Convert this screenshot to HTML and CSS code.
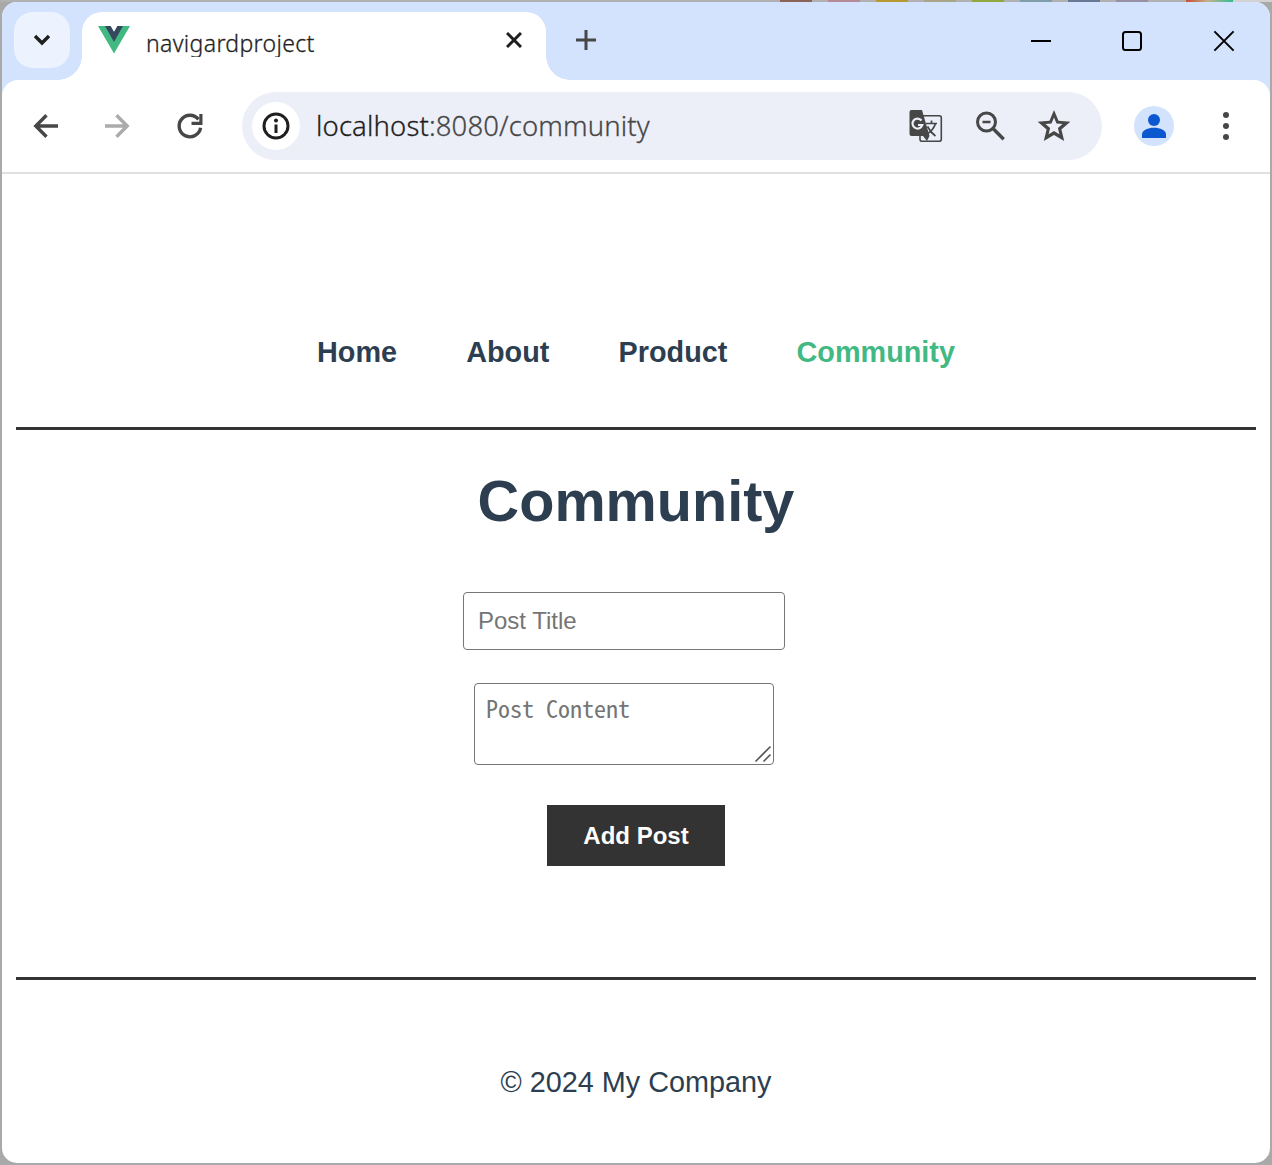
FILE: index.html
```html
<!DOCTYPE html>
<html lang="en">
<head>
<meta charset="utf-8">
<title>navigardproject</title>
<link rel="stylesheet" href="styles.css">
</head>
<body>
<div class="window">
  <div class="tabstrip">
    <div class="tab-search">
      <svg width="18" height="12" viewBox="0 0 18 12"><path d="M2 2l7 7 7-7" fill="none" stroke="#1f1f1f" stroke-width="3.400"/></svg>
    </div>
    <div class="tab-gap"></div>
    <div class="tab">
      <svg class="favicon" width="32" height="28" viewBox="0 0 32 28"><path d="M0 0h12.500L16 6l3.500-6H32L16 27.500z" fill="#42b883"/><path d="M7 0h5.500L16 6l3.500-6H25L16 16z" fill="#35495e"/></svg>
      <span class="tab-title">navigardproject</span>
      <svg class="tab-close" width="16" height="16" viewBox="0 0 16 16"><path d="M1 1l14 14M15 1L1 15" stroke="#1f1f1f" stroke-width="3"/></svg>
    </div>
    <div class="strip-rest">
      <svg width="20" height="20" viewBox="0 0 20 20"><path d="M0 10h20M10 0v20" stroke="#474747" stroke-width="3"/></svg>
      <div class="controls">
        <svg width="20" height="20" viewBox="0 0 20 20"><path d="M1 10h20" stroke="#000" stroke-width="2"/></svg>
        <svg width="20" height="20" viewBox="0 0 20 20"><rect x="1" y="1" width="18" height="18" rx="2.500" fill="none" stroke="#000" stroke-width="2"/></svg>
        <svg width="20" height="20" viewBox="0 0 20 20"><path d="M.4.4l19.200 19.200M19.600.4L.4 19.600" stroke="#000" stroke-width="2"/></svg>
      </div>
    </div>
  </div>
  <div class="toolbar-bg">
    <div class="toolbar">
      <div class="nav-buttons">
        <svg width="24" height="24" viewBox="0 0 24 24"><path d="M24 12H2M12.500 1.200L1.800 12l10.700 10.800" fill="none" stroke="#474747" stroke-width="3.400"/></svg>
        <svg width="24" height="24" viewBox="0 0 24 24"><path d="M0 12h22M11.500 1.200L22.200 12 11.500 22.800" fill="none" stroke="#ababab" stroke-width="3.400"/></svg>
        <svg width="26" height="26" viewBox="0 0 26 26"><path d="M21.500 6.400A10.800 10.800 0 1 0 23.600 14.800" fill="none" stroke="#474747" stroke-width="3.400"/><path d="M22.300 1h3.200v11H14.500V8.800h7.800z" fill="#474747"/></svg>
      </div>
      <div class="omnibox">
        <div class="site-info">
          <svg width="28" height="28" viewBox="0 0 28 28"><circle cx="14" cy="14" r="12" fill="none" stroke="#1f1f1f" stroke-width="3"/><circle cx="14" cy="8.600" r="2" fill="#1f1f1f"/><path d="M14 12.500v8.500" stroke="#1f1f1f" stroke-width="3"/></svg>
        </div>
        <div class="url"><span class="host">localhost</span>:8080/community</div>
        <div class="actions">
          <svg width="34" height="34" viewBox="0 0 34 34"><rect x="11" y="6.800" width="21.300" height="25.400" rx="2" fill="none" stroke="#474747" stroke-width="1.600"/><path d="M2.500 1H13L20.500 27l-2.500 5-4-5H2.500A2 2 0 0 1 .5 25V3a2 2 0 0 1 2-2z" fill="#474747"/><path d="M17 14.500h11M22.500 11.500v3M26.500 14.500q-2 7-9.500 11M18.500 17.500q3 6 8 9.500" fill="none" stroke="#474747" stroke-width="1.700"/><path d="M12.500 11.500A5 5 0 1 0 13.300 16H9" fill="none" stroke="#eceef8" stroke-width="2.200"/></svg>
          <svg width="30" height="30" viewBox="0 0 30 30"><circle cx="11.500" cy="11" r="9" fill="none" stroke="#474747" stroke-width="3"/><path d="M7.500 11h8" stroke="#474747" stroke-width="2.600"/><path d="M18 17.500l10.700 10.700" stroke="#474747" stroke-width="3.400"/></svg>
          <svg width="34" height="32" viewBox="0 0 34 32"><path fill-rule="evenodd" d="M17 0l4.500 10.800L33.300 11.800 24.400 19.500 27.200 31 17 25 6.800 31 9.600 19.500.7 11.800 12.500 10.800zM17 7.500l-2.500 6-6 .5 4.600 4-1.500 6.200 5.400-3.300 5.400 3.300-1.500-6.200 4.600-4-6-.5z" fill="#474747"/></svg>
        </div>
      </div>
      <div class="avatar">
        <svg width="24" height="24" viewBox="0 0 24 24"><circle cx="12" cy="6" r="6" fill="#0b57d0"/><path d="M0 24v-3.500C0 16 6 13.700 12 13.700S24 16 24 20.500V24z" fill="#0b57d0"/></svg>
      </div>
      <svg class="menu" width="6" height="28" viewBox="0 0 6 28"><g fill="#474747"><circle cx="3" cy="3" r="3"/><circle cx="3" cy="14" r="3"/><circle cx="3" cy="25" r="3"/></g></svg>
    </div>
  </div>
  <div class="page">
    <nav class="site-nav"><a>Home</a><a>About</a><a>Product</a><a class="active">Community</a></nav>
    <main class="content">
      <h1>Community</h1>
      <input class="title-input" type="text" placeholder="Post Title">
      <div class="content-field">
        <textarea class="content-input" placeholder="Post Content"></textarea>
        <svg class="grip" width="18" height="18" viewBox="0 0 18 18"><path d="M1.500 16.500l15-15M9.500 16.500l7-7" stroke="#555" stroke-width="1.600"/></svg>
      </div>
      <button class="add-button">Add Post</button>
    </main>
    <footer class="site-footer">© 2024 My Company</footer>
  </div>
</div>
</body>
</html>
```
FILE: styles.css
```css
* { box-sizing: border-box; }
svg { display: block; flex: none; }
body {
  margin: 0;
  height: 1165px;
  padding: 2px;
  overflow: hidden;
  background:
    linear-gradient(90deg, #b1b1b1 0 780px, #8c6254 780px 812px, #b1b1b1 812px 828px, #b58a96 828px 860px, #b1b1b1 860px 876px, #b79a31 876px 908px, #b1b1b1 908px 924px, #aba588 924px 956px, #b1b1b1 956px 972px, #91a83e 972px 1004px, #b1b1b1 1004px 1020px, #7e9faa 1020px 1052px, #b1b1b1 1052px 1068px, #687996 1068px 1100px, #b1b1b1 1100px 1116px, #9990a6 1116px 1148px, #b1b1b1 1148px 1186px, #c84d35 1186px, #c4b28a 1208px, #30bd95 1233px, #d2d2d2 1233px) 0 0 / 100% 2px no-repeat,
    #a9a9a9;
  font-family: "Liberation Sans", Arial, sans-serif;
}
.window {
  height: 1161px;
  display: flex;
  flex-direction: column;
  border-radius: 15px;
  overflow: hidden;
  background: #fff;
}
.tabstrip { display: flex; height: 78px; background: #d3e3fd; }
.tab-search {
  display: flex;
  align-items: center;
  justify-content: center;
  width: 56px;
  height: 56px;
  margin: 10px 0 0 12px;
  border-radius: 19px;
  background: #ecf3fe;
}
.tab-gap {
  width: 24px;
  margin-left: -12px;
  background: radial-gradient(circle at 0 0, transparent 23.500px, #fff 24px) 0 54px / 24px 24px no-repeat;
}
.tab {
  display: flex;
  width: 464px;
  height: 68px;
  margin-top: 10px;
  padding: 0 24px 0 16px;
  border-radius: 20px 20px 0 0;
  background: #fff;
}
.favicon { margin-top: 14px; }
.tab-title {
  flex: 1;
  height: 30px;
  margin: 15px 0 0 16px;
  overflow: hidden;
  line-height: 32px;
  font-family: "Noto Sans", sans-serif;
  font-size: 23px;
  font-weight: 300;
  letter-spacing: .35px;
  -webkit-text-stroke: .3px #1f1f1f;
  color: #1f1f1f;
}
.tab-close { margin-top: 20px; }
.strip-rest {
  flex: 1;
  display: flex;
  justify-content: space-between;
  padding: 28px 36px 0 30px;
  background: radial-gradient(circle at 24px 0, transparent 23.500px, #fff 24px) 0 54px / 24px 24px no-repeat;
}
.controls { display: flex; gap: 72px; padding-top: 1px; }
.controls svg { overflow: visible; }
.toolbar-bg { background: linear-gradient(#d3e3fd 20px, #fff 20px); }
.toolbar {
  display: flex;
  align-items: center;
  height: 94px;
  padding: 0 41px 0 32px;
  border-bottom: 2px solid #e0e0e1;
  border-radius: 16px 16px 0 0;
  background: #fff;
}
.nav-buttons { display: flex; align-items: center; gap: 47px; width: 208px; }
.nav-buttons svg { overflow: visible; }
.nav-buttons svg:last-child { margin-left: 1px; }
.omnibox {
  display: flex;
  align-items: center;
  width: 860px;
  height: 68px;
  padding: 0 31px 0 10px;
  border-radius: 34px;
  background: #eceef8;
}
.site-info {
  display: flex;
  align-items: center;
  justify-content: center;
  width: 48px;
  height: 48px;
  border-radius: 50%;
  background: #fff;
}
.url {
  flex: 1;
  margin-left: 16px;
  line-height: 40px;
  font-family: "Noto Sans", sans-serif;
  font-size: 27.500px;
  font-weight: 300;
  letter-spacing: .13px;
  -webkit-text-stroke: .3px;
  color: #474747;
}
.host { color: #1f1f1f; }
.actions { display: flex; align-items: center; gap: 32px; }
.avatar {
  display: flex;
  align-items: center;
  justify-content: center;
  width: 40px;
  height: 40px;
  margin-left: 32px;
  border-radius: 50%;
  background: #d3e3fd;
}
.menu { margin-left: auto; }
.page { flex: 1; padding: 0 14px; color: #2c3e50; }
.site-nav {
  display: flex;
  justify-content: center;
  gap: 69.200px;
  height: 256px;
  padding-top: 162px;
  border-bottom: 3px solid #333;
  font-size: 28.800px;
  font-weight: bold;
  line-height: 33px;
}
.active { color: #42b983; }
.content {
  display: flex;
  flex-direction: column;
  align-items: center;
  height: 550px;
  border-bottom: 3px solid #333;
}
h1 { margin: 38px 0 0; font-size: 57.600px; line-height: 66px; }
.title-input {
  width: 322px;
  height: 58px;
  margin: 58px 24px 0 0;
  padding: 0 14px;
  border: 1px solid #767676;
  border-radius: 4px;
  font: 24px "Liberation Sans", Arial, sans-serif;
}
.content-field {
  position: relative;
  margin: 33px 24px 0 0;
}
.content-input {
  display: block;
  width: 300px;
  height: 82px;
  padding: 7px 11px;
  border: 1px solid #767676;
  border-radius: 4px;
  resize: none;
  font: 300 24px/34px "Noto Sans Mono CJK KR", "Liberation Mono", monospace;
}
.grip { position: absolute; right: 2px; bottom: 2px; }
.title-input::placeholder, .content-input::placeholder { color: #757575; }
.add-button {
  width: 178px;
  height: 61px;
  margin-top: 40px;
  border: 0;
  background: #333;
  color: #fff;
  font: bold 24px "Liberation Sans", Arial, sans-serif;
}
.site-footer { padding-top: 86px; text-align: center; font-size: 28.800px; line-height: 33px; }
```
